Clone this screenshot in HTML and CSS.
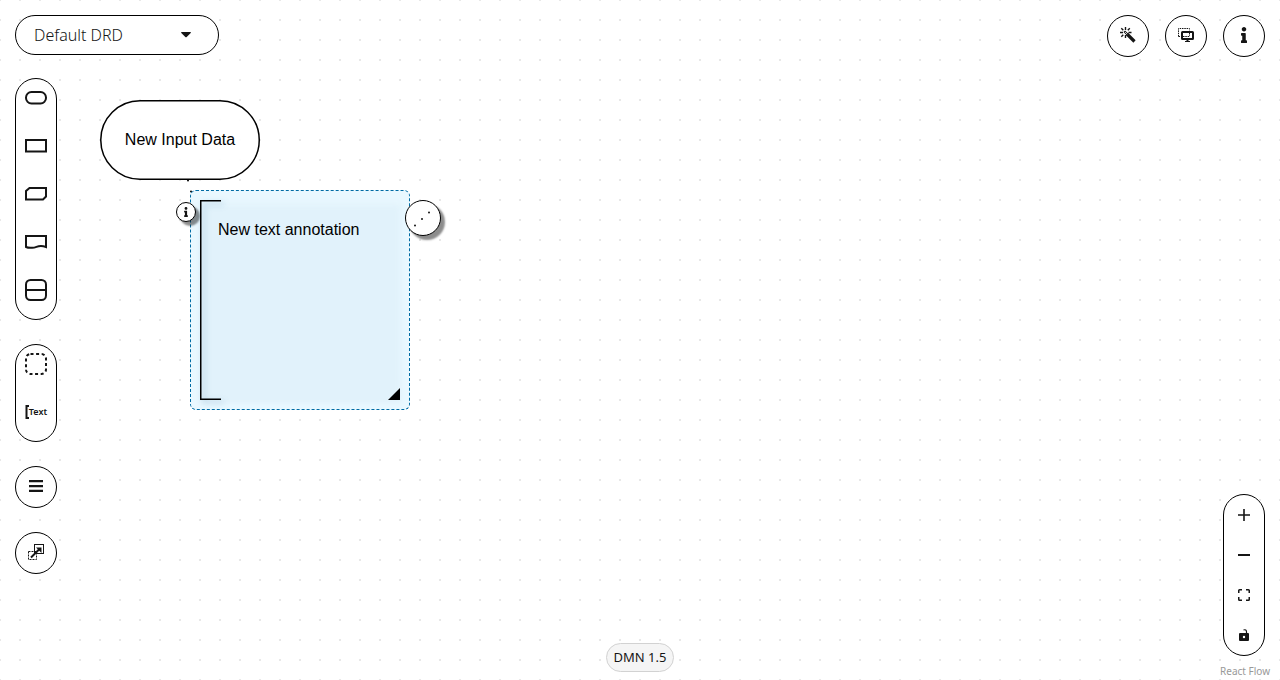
FILE: index.html
```html
<!DOCTYPE html>
<html lang="en">
<head>
<meta charset="utf-8">
<title>DMN Editor</title>
<link rel="stylesheet" href="styles.css">
</head>
<body>
<div class="editor">
  <main class="canvas">
    <svg class="edge" viewBox="0 0 120 120" aria-hidden="true"><circle cx="8" cy="40.500" r="1"/><circle cx="11" cy="51.500" r="1"/></svg>
    <div class="node input-data">
      <svg viewBox="0 0 160 80" aria-hidden="true"><rect x=".75" y=".75" width="158.500" height="78.500" rx="39.250"/></svg>
      <span>New Input Data</span>
    </div>
    <div class="node annotation">
      <div class="annotation-body">
        <svg class="bracket" viewBox="0 0 200 200" aria-hidden="true"><path d="M21 .75H.75v198.500H21"/></svg>
        <span>New text annotation</span>
        <svg class="resize" viewBox="0 0 12 12" aria-hidden="true"><path d="M12 0v12H0z"/></svg>
      </div>
      <button class="node-info" aria-label="Node properties"><svg width="6" height="10" viewBox="0 0 192 512"><use href="#info"/></svg></button>
      <button class="node-link" aria-label="Add association"><svg width="34" height="34" viewBox="0 0 34 34"><circle cx="9" cy="24.500" r="1"/><circle cx="16" cy="18" r="1"/><circle cx="23" cy="11.500" r="1"/></svg></button>
    </div>
  </main>
  <svg class="symbols" aria-hidden="true"><defs>
    <path id="info" d="M20 424.200h20V279.800H20c-11 0-20-9-20-20V212c0-11 9-20 20-20h112c11 0 20 9 20 20v212.200h20c11 0 20 9 20 20V492c0 11-9 20-20 20H20c-11 0-20-9-20-20v-47.800c0-11 9-20 20-20zM96 0C56.200 0 24 32.200 24 72s32.200 72 72 72 72-32.200 72-72S135.800 0 96 0z"/>
  </defs></svg>
  <div class="overlay">
    <header class="top">
      <div class="drd">
        <select aria-label="DRD"><option>Default DRD</option></select>
        <svg width="10" height="6" viewBox="0 0 10 6" aria-hidden="true"><path d="M.7 0h8.600q1 .2.400 1L5.700 5q-.7.700-1.400 0L.3 1q-.6-.8.400-1z"/></svg>
      </div>
      <div class="actions">
        <button class="round" aria-label="Autolayout"><svg width="16" height="16" viewBox="0 0 16 16"><path d="M7 7 14.500 14.500" stroke="currentColor" stroke-width="3.200"/><path d="M4.300 4.300 7.800 7.800" stroke="currentColor" stroke-width="2.200"/><path d="M5.500 0v3M5.500 8v3M0 5.500h3M8.500 5.500h3M1.300 1.300l2 2M9.800 1.300l-2 2M1.300 9.800l2-2" stroke="currentColor" stroke-width="1.400"/><path d="m5 5 2.200 2.200" stroke="white" stroke-width=".8"/></svg></button>
        <button class="round" aria-label="Overlays"><svg width="16" height="14" viewBox="0 0 16 14"><path d="M.5 8.500v-8h11v2M.5 8.500h2" fill="none" stroke="currentColor" stroke-dasharray="1.500 .8"/><rect x="4" y="4" width="11" height="7" rx=".5" fill="white" stroke="currentColor" stroke-width="2"/><path d="M5 8.500h7M11.500 5v3" stroke="currentColor" stroke-dasharray="1.500 .8"/><path d="M8.500 11h2v2h1.500v1H7v-1h1.500z"/></svg></button>
        <button class="round" aria-label="Properties"><svg width="6" height="16" viewBox="0 0 192 512"><use href="#info"/></svg></button>
      </div>
    </header>
    <div class="middle">
      <aside class="palette">
        <div class="pill shapes">
          <button aria-label="Input data"><svg width="24" height="24" viewBox="0 0 24 24"><rect x="2" y="6" width="20" height="11.500" rx="5.500"/></svg></button>
          <button aria-label="Decision"><svg width="24" height="24" viewBox="0 0 24 24"><rect x="2" y="6" width="20" height="11.500"/></svg></button>
          <button aria-label="Business knowledge model"><svg width="24" height="24" viewBox="0 0 24 24"><path d="M5.500 6H22v8.500l-3 3H2V9z"/></svg></button>
          <button aria-label="Knowledge source"><svg width="24" height="24" viewBox="0 0 24 24"><path d="M2 6h20v11c-8-3-9 1-14 .8C5 18 4 18 2 17z"/></svg></button>
          <button aria-label="Decision service"><svg width="24" height="24" viewBox="0 0 24 24"><rect x="2" y="2" width="20" height="20" rx="4.500"/><path d="M2 12h20"/></svg></button>
        </div>
        <div class="pill shapes">
          <button aria-label="Group"><svg width="24" height="24" viewBox="0 0 24 24"><rect x="2" y="2" width="20" height="20" rx="4.500" stroke-dasharray="3 2.600"/></svg></button>
          <button class="text-tool" aria-label="Text annotation"><svg width="4" height="14" viewBox="0 0 4 14"><path d="M4 1H1.500v12H4"/></svg><span>Text</span></button>
        </div>
        <button class="round menu" aria-label="DRG nodes"><svg width="14" height="12" viewBox="0 0 14 12"><path d="M0 0h14v2.300H0zM0 4.900h14v2.300H0zM0 9.800h14v2.200H0z"/></svg></button>
        <button class="round menu" aria-label="External nodes"><svg width="16" height="16" viewBox="0 0 16 16"><rect x="6.500" y=".5" width="9" height="9" fill="none" stroke="currentColor"/><rect x=".5" y="7.500" width="8" height="8" fill="none" stroke="currentColor" stroke-dasharray="2 1"/><path d="m3 13.500 8.500-8.500" stroke="currentColor" stroke-width="2"/><path d="M8 3.500h5.500V9z"/></svg></button>
      </aside>
      <div class="pill zoom">
        <button aria-label="Zoom in"><svg width="12" height="12" viewBox="0 0 12 12"><path d="M0 5.200h5.200V0h1.600v5.200H12v1.600H6.800V12H5.200V6.800H0z"/></svg></button>
        <button aria-label="Zoom out"><svg width="12" height="2" viewBox="0 0 12 2"><path d="M0 0h12v2H0z"/></svg></button>
        <button aria-label="Fit view"><svg width="12" height="12" viewBox="0 0 12 12"><path d="M.75 4V1.500q0-.75.750-.75H4M8 .75h2.500q.750 0 .750.750V4M11.250 8v2.500q0 .750-.750.750H8M4 11.250H1.500q-.750 0-.750-.750V8" fill="none" stroke="currentColor" stroke-width="1.500"/></svg></button>
        <button aria-label="Toggle interactivity"><svg width="10" height="12" viewBox="0 0 10 12"><path d="M4.500 1Q7.500 0 7.500 3v1.500" fill="none" stroke="currentColor" stroke-width="1.200"/><path fill-rule="evenodd" d="M1 4h8q1 0 1 1v6q0 1-1 1H1q-1 0-1-1V5q0-1 1-1zm4 2.800a1.200 1.200 0 1 0 0 2.400 1.200 1.200 0 1 0 0-2.400z"/></svg></button>
      </div>
    </div>
    <footer class="bottom"><span class="version">DMN 1.5</span><a href="#" class="credit">React Flow</a></footer>
  </div>
</div>
</body>
</html>
```
FILE: styles.css
```css
* { box-sizing: border-box; }
body { margin: 0; color: #151515; font-family: "Noto Sans", sans-serif; }
svg { display: block; fill: currentColor; }
button { padding: 0; border: 0; background: none; color: #151515; font: inherit; cursor: pointer; display: flex; align-items: center; justify-content: center; }
.symbols { position: absolute; width: 0; height: 0; }
.editor {
  position: relative;
  min-height: 100vh;
  overflow: hidden;
  background-color: white;
  background-image: conic-gradient(from 270deg at 2px 2px, #e8e8e8 90deg, transparent 0);
  background-size: 20px 20px;
  background-position: -1px -1px;
}

/* Diagram */
.canvas { position: absolute; inset: 0; font: 16px/24px "Liberation Sans", Arial, sans-serif; color: black; }
.node { position: absolute; }
.edge { position: absolute; left: 180px; top: 140px; width: 120px; height: 120px; }
.input-data {
  left: 100px; top: 100px; width: 160px; height: 80px;
  display: grid; place-items: center;
}
.input-data > * { grid-area: 1 / 1; }
.input-data rect { fill: rgba(255, 255, 255, .9); stroke: black; stroke-width: 1.500; }
.annotation {
  left: 190px; top: 190px; width: 220px; height: 220px; padding: 9px;
  border: 1px dashed #006ba4; border-radius: 6px;
  background: #e9f8ff;
}
.annotation-body { position: relative; height: 200px; padding: 18px; background: #e1f2fb; box-shadow: 1px 3px 5px #e1f2fb, inset 0 5px 6px #e8f7fe; }
.bracket { position: absolute; inset: 0; overflow: visible; filter: drop-shadow(3px 3px 3px rgba(0, 80, 130, .3)); }
.bracket path { fill: none; stroke: black; stroke-width: 1.500; }
.resize { position: absolute; right: 0; bottom: 0; width: 12px; height: 12px; }
.node-info, .node-link { position: absolute; border: 1px solid black; border-radius: 50%; background: white; box-shadow: 4px 4px 2px rgba(0, 0, 0, .45); }
.node-info { left: -15px; top: 11px; width: 20px; height: 20px; }
.node-link { left: 214px; top: 9px; width: 36px; height: 36px; }

/* Panels */
.overlay { position: relative; display: flex; flex-direction: column; min-height: 100vh; padding: 15px 15px 0; pointer-events: none; }
.overlay button, .overlay select, .overlay a { pointer-events: auto; }
.top { display: flex; justify-content: space-between; align-items: flex-start; }
.drd { display: grid; align-items: center; width: 204px; height: 40px; }
.drd select, .drd svg { grid-area: 1 / 1; }
.drd svg { justify-self: end; margin-right: 28px; pointer-events: none; }
.drd select { appearance: none; width: 100%; height: 40px; padding: 0 18px; border: 1px solid black; border-radius: 20px; background: white; color: #151515; font: 300 16px/24px "Noto Sans", sans-serif; }
.actions { display: flex; gap: 16px; }
.round { width: 42px; height: 42px; border: 1px solid black; border-radius: 50%; background: white; }
.actions .round, .menu { padding-bottom: 2px; }
.middle { flex: 1; display: flex; justify-content: space-between; padding-top: 21px; }
.palette { display: flex; flex-direction: column; gap: 24px; }
.pill { width: 42px; border: 1px solid black; border-radius: 21px; background: white; }
.pill button { width: 100%; }
.shapes { display: flex; flex-direction: column; }
.shapes button { height: 48px; padding-bottom: 10px; }
.shapes svg { fill: none; stroke: currentColor; stroke-width: 2; }
.shapes .text-tool { gap: 0; font-size: 9px; line-height: 12px; font-weight: 600; }
.zoom { align-self: flex-end; }
.zoom button { height: 40px; }
.bottom { position: relative; display: flex; justify-content: center; align-items: center; height: 24px; }
.version { position: absolute; bottom: 8px; height: 29px; padding: 0 7px; border: 1px solid #d2d2d2; border-radius: 15px; background: #f5f5f5; font-size: 13px; line-height: 27px; }
.credit { position: absolute; right: -5px; bottom: 2px; color: #999; font-size: 10px; line-height: 14px; text-decoration: none; }
```
